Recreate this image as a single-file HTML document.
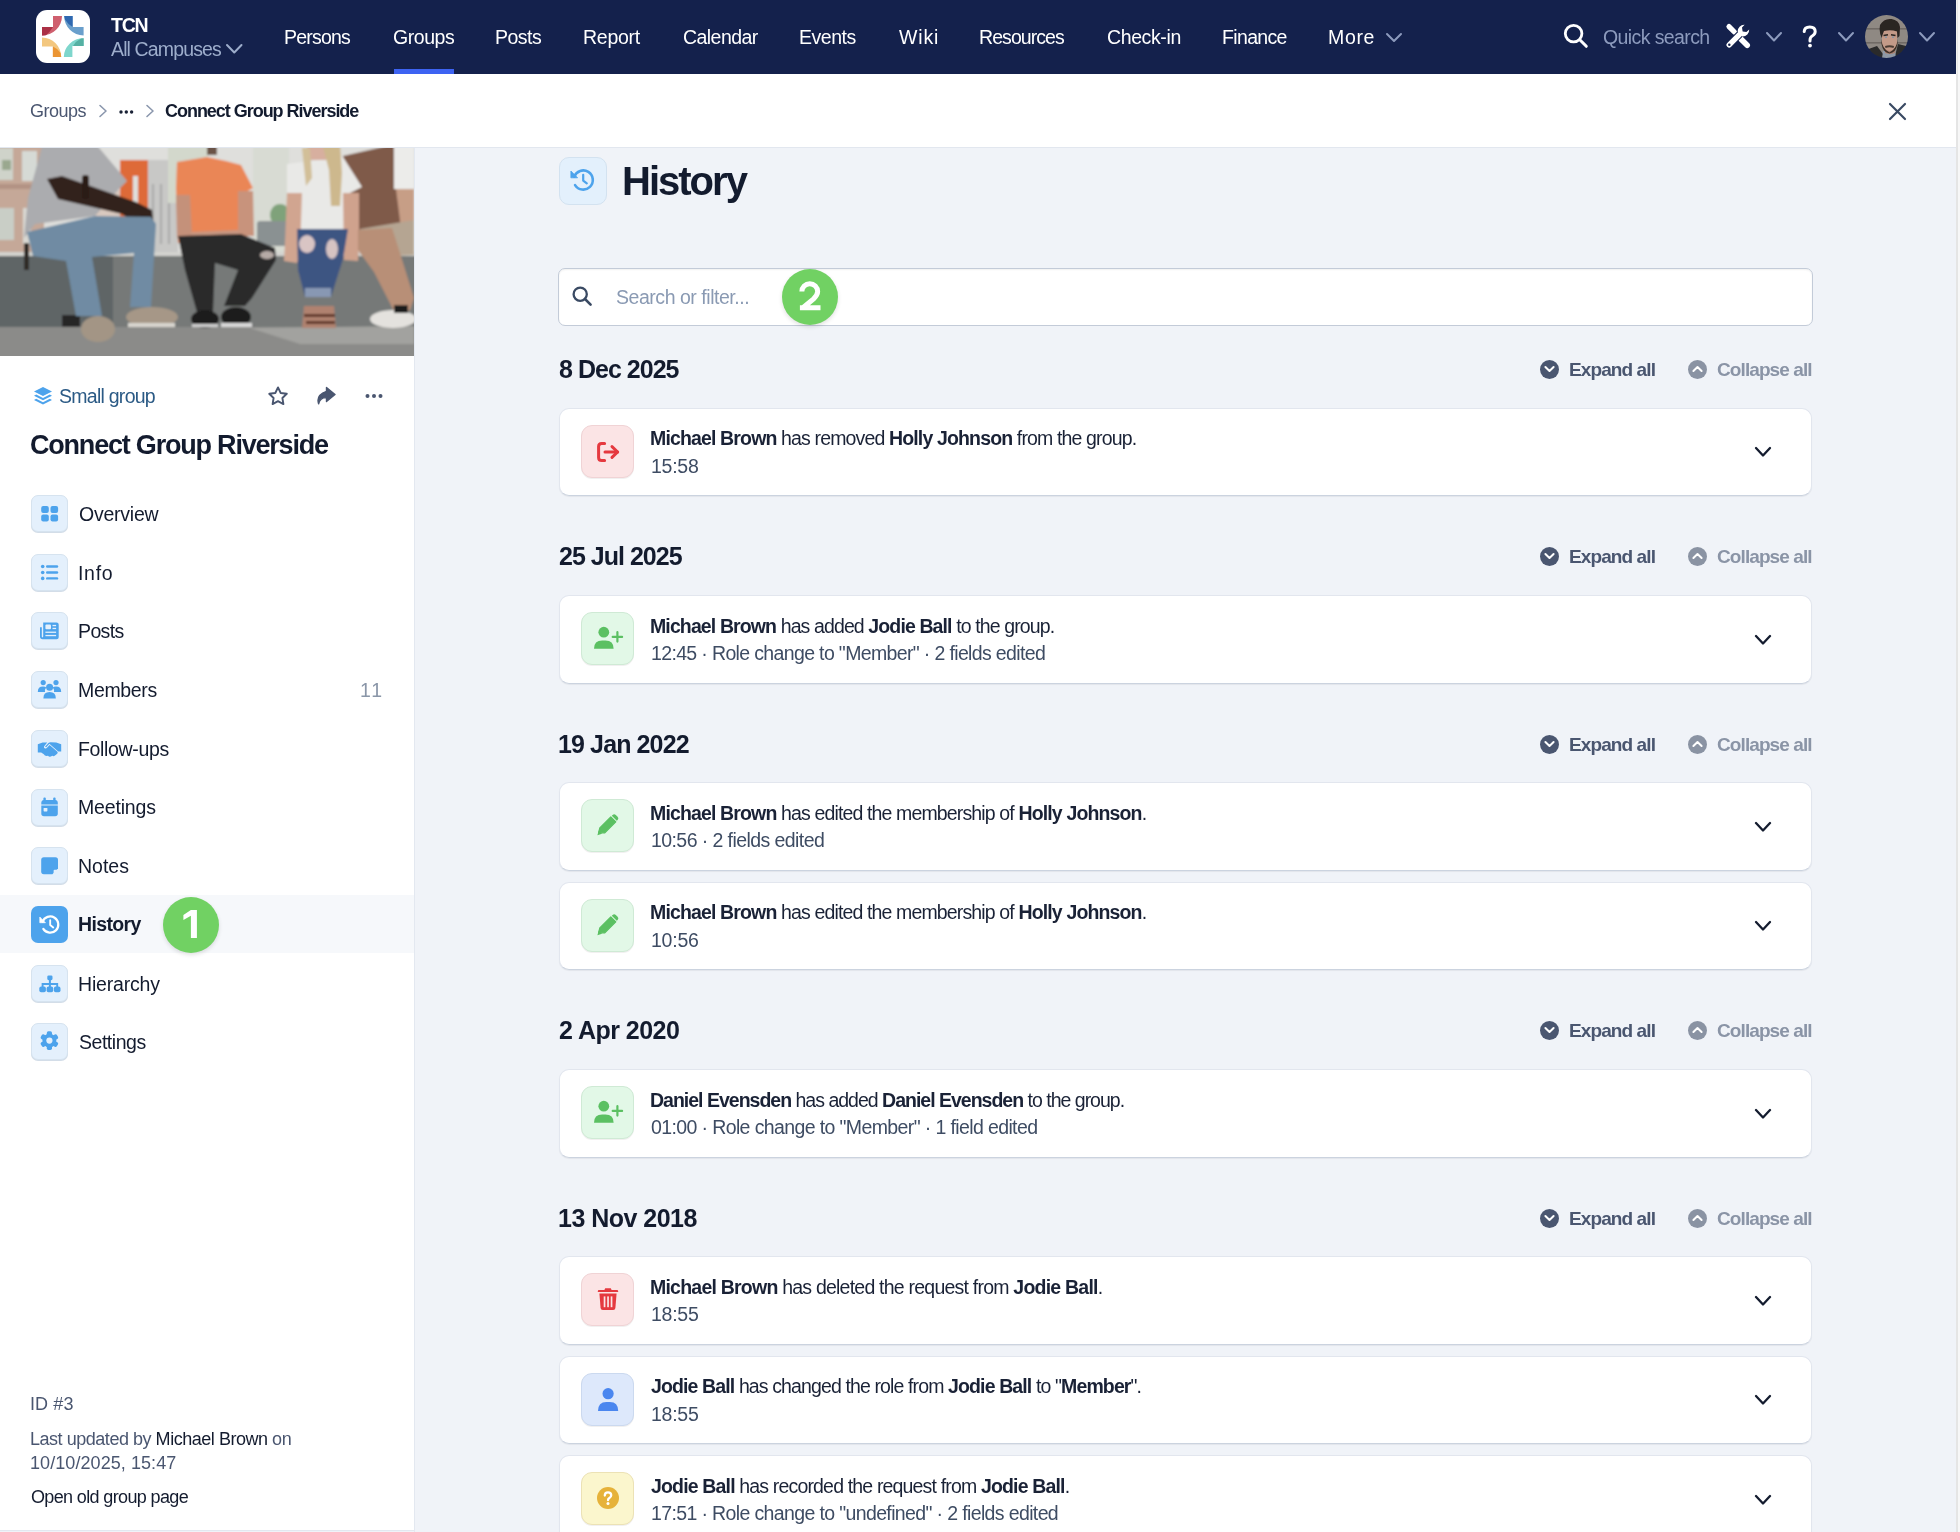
<!DOCTYPE html>
<html><head><meta charset="utf-8"><title>History</title>
<style>
*{box-sizing:border-box;margin:0;padding:0}
html,body{width:1960px;height:1532px;overflow:hidden;background:#f0f3f8;font-family:"Liberation Sans",sans-serif;}
.t{position:absolute;white-space:nowrap;will-change:transform;}
b{font-weight:700;}
svg{display:block}
</style></head><body>
<div style="position:absolute;left:0px;top:0px;width:1956px;height:74px;background:#14214c;"></div><div style="position:absolute;left:0px;top:74px;width:1956px;height:73px;background:#fff;"></div><div style="position:absolute;left:0px;top:147px;width:1956px;height:1px;background:#e2e7ef;"></div><div style="position:absolute;left:0px;top:148px;width:414px;height:1383px;background:#fff;"></div><div style="position:absolute;left:414px;top:148px;width:1px;height:1384px;background:#e3e8f0;"></div><div style="position:absolute;left:0px;top:1530px;width:414px;height:1px;background:#e3e8f0;"></div><div style="position:absolute;left:1956px;top:0px;width:4px;height:1532px;background:#f7f7f7;"></div><div style="position:absolute;left:1956px;top:74px;width:2px;height:1458px;background:#e5e5e5;"></div><div style="position:absolute;left:1956px;top:0px;width:1px;height:74px;background:#f4f4f1;"></div><div style="position:absolute;left:1957px;top:0px;width:1px;height:74px;background:#e8e8e8;"></div><div style="position:absolute;left:36px;top:10px;width:54px;height:53px;background:#fff;border-radius:11px;"></div><svg style="position:absolute;left:36px;top:10px;" width="54" height="53" viewBox="0 0 54 53">
<path d="M17,6 L26,6 A20,19.5 0 0 1 6,25.5 L6,17 L17,17 Z" fill="#cf5f6e"></path>
<path d="M6,17 L17,17 Q13.5,22.5 10,25.3 Q8,25.5 6,25.5 Z" fill="#ab3045"></path>
<path d="M28.2,6 L36.6,6 L36.6,17 L47.6,17 L47.6,25.4 A19.4,19.4 0 0 1 28.2,6 Z" fill="#6a9fcc"></path>
<path d="M28.2,6 L36.6,6 L36.6,17 Q32,14.5 29,9.5 Z" fill="#2f68b0"></path>
<path d="M6,27.5 A19.5,19.5 0 0 1 25.2,47 L16.9,47 L16.9,36.4 L6,36.4 Z" fill="#f3c77f"></path>
<path d="M16.9,36.4 Q22,38.5 24.6,43 L25.2,47 L16.9,47 Z" fill="#eb9533"></path>
<path d="M47.6,28.2 L47.6,36 L36.4,36 L36.4,47 L27.8,47 A19.7,19 0 0 1 47.6,28.2 Z" fill="#7ed6cc"></path>
<path d="M47.6,28.2 L47.6,36 L37,36 Q40,31 45,28.6 Z" fill="#55b0a3"></path>
</svg><svg style="position:absolute;left:0px;top:148px;" width="414" height="208" viewBox="0 0 414 208">
<defs><filter id="pb" x="-5%" y="-5%" width="110%" height="110%"><feGaussianBlur stdDeviation="1.1"></feGaussianBlur></filter>
<clipPath id="pc"><rect width="414" height="208"></rect></clipPath></defs>
<g clip-path="url(#pc)"><g filter="url(#pb)">
<rect x="-5" y="-5" width="424" height="220" fill="#dfdfdc"></rect>
<rect x="-5" y="-5" width="49" height="114" fill="#c5a898"></rect>
<rect x="-5" y="0" width="18" height="32" fill="#cfd3ca"></rect>
<rect x="2" y="12" width="9" height="10" fill="#9aa88f"></rect>
<rect x="22" y="3" width="15" height="30" fill="#d6dad5"></rect>
<rect x="-5" y="60" width="19" height="32" fill="#c9cec6"></rect>
<rect x="23" y="60" width="8" height="36" fill="#d9d8d2"></rect>
<rect x="-5" y="36" width="49" height="5" fill="#b39384"></rect>
<rect x="95" y="42" width="27" height="66" fill="#d9c9bf"></rect>
<rect x="148" y="12" width="30" height="92" fill="#c8c8c6"></rect>
<rect x="152" y="36" width="2" height="60" fill="#a9aaa9"></rect><rect x="160" y="36" width="2" height="60" fill="#a9aaa9"></rect><rect x="168" y="36" width="2" height="60" fill="#a9aaa9"></rect>
<rect x="168" y="-5" width="40" height="60" fill="#d3d8cc"></rect>
<path d="M120,12 L148,12 L148,107 L138,107 L138,28 L133,28 L133,107 L120,107 Z" fill="#de6b39"></path>
<rect x="253" y="-5" width="36" height="113" fill="#d8dbd3"></rect>
<ellipse cx="280" cy="67" rx="10" ry="11" fill="#7fa27a"></ellipse>
<rect x="257" y="73" width="31" height="25" rx="3" fill="#8a9192"></rect>
<path d="M343,8 L400,-5 L414,-5 L414,72 L362,84 L345,84 Z" fill="#7f5a4a"></path>
<rect x="-5" y="107" width="424" height="73" fill="#767978"></rect>
<rect x="-5" y="107" width="118" height="73" fill="#5f6566"></rect>
<rect x="-5" y="104" width="424" height="4" fill="#d3d3cf"></rect>
<rect x="-5" y="179" width="424" height="35" fill="#8b8b89"></rect>
<path d="M250,180 L414,178 L414,196 L300,196 Z" fill="#a2a29f"></path>
<rect x="62" y="167" width="18" height="12" fill="#262626"></rect>
<!-- person 1 -->
<rect x="72" y="-5" width="23" height="12" fill="#3d2c25"></rect>
<path d="M43,-5 L95,-5 L127,33 L118,42 L95,68 L35,76 L24,90 L28,50 Z" fill="#abacaf"></path>
<path d="M47,31 L62,28 L136,54 L152,62 L153,72 L140,78 L122,66 L58,51 Z" fill="#33241f"></path>
<rect x="82" y="27" width="7" height="24" rx="3" fill="#2a1a18"></rect>
<path d="M27,84 L95,68 L151,69 L156,76 L151,159 L130,159 L134,105 L92,109 L102,168 L76,168 L66,113 L33,108 Z" fill="#6f8ba3"></path>
<rect x="24" y="95" width="5" height="27" fill="#2e2a26"></rect>
<ellipse cx="98" cy="181" rx="17" ry="13" fill="#a39585"></ellipse>
<ellipse cx="152" cy="169" rx="26" ry="10" fill="#a69787"></ellipse>
<rect x="128" y="175" width="47" height="4" fill="#d8d5cf"></rect>
<!-- person 2 -->
<rect x="207" y="-5" width="10" height="12" fill="#6b5246"></rect>
<path d="M177,14 L207,9 L226,13 L241,17 L253,40 L242,46 L240,84 L178,95 L176,40 Z" fill="#ea8656"></path>
<path d="M238,43 L253,43 L254,88 L238,88 Z" fill="#c8937c"></path>
<path d="M176,47 L190,47 L192,88 L177,90 Z" fill="#c4917a"></path>
<path d="M190,84 L238,82 L240,102 L205,104 Z" fill="#c79680"></path>
<path d="M178,88 L241,86 L275,100 L276,112 L252,150 L245,158 L224,158 L238,122 L215,115 L213,165 L198,168 L185,122 Z" fill="#2a2a2c"></path>
<ellipse cx="267" cy="107" rx="7" ry="4" fill="#b6aaa6"></ellipse>
<ellipse cx="236" cy="169" rx="15" ry="10" fill="#1e1e1f"></ellipse>
<rect x="221" y="175" width="31" height="4" fill="#d8d8d8"></rect>
<ellipse cx="205" cy="171" rx="14" ry="9" fill="#1e1e1f"></ellipse>
<rect x="192" y="176" width="26" height="3" fill="#cfcfcf"></rect>
<!-- person 3 -->
<path d="M287,16 L343,9 L362,39 L348,46 L348,84 L299,84 L302,45 L287,45 Z" fill="#e9e9e7"></path>
<rect x="307" y="-5" width="19" height="17" fill="#d7af9f"></rect>
<path d="M302,0 L310,0 L312,30 L306,38 Z" fill="#d2bf98"></path>
<path d="M322,-5 L340,-5 L342,25 L340,58 L331,58 L329,22 Z" fill="#cdb88d"></path>
<path d="M287,45 L302,45 L300,106 L297,115 L284,113 L285,95 Z" fill="#d1a590"></path>
<path d="M343,45 L359,45 L359,95 L358,113 L344,112 Z" fill="#cfa28d"></path>
<path d="M297,81 L348,81 L343,111 L331,149 L305,149 L298,122 Z" fill="#3e5582"></path>
<ellipse cx="307" cy="96" rx="8" ry="9" fill="#d9c5c4"></ellipse>
<ellipse cx="332" cy="101" rx="6" ry="10" fill="#d6c3c2"></ellipse>
<rect x="305" y="140" width="26" height="9" fill="#8898b3"></rect>
<path d="M304,158 L334,158 L336,180 L302,180 Z" fill="#b08270"></path><rect x="304" y="166" width="31" height="3" fill="#5e3526"></rect><rect x="306" y="173" width="29" height="3" fill="#5e3526"></rect>
<!-- person 4 -->
<path d="M394,-5 L414,-5 L414,41 L394,41 Z" fill="#ececea"></path>
<path d="M396,41 L414,41 L414,88 L402,88 Z" fill="#c79e86"></path>
<path d="M360,81 L414,72 L414,107 L390,108 L360,95 Z" fill="#b5a592"></path>
<path d="M358,82 L392,80 L399,102 L414,150 L410,162 L396,167 L374,124 L358,102 Z" fill="#b88f77"></path>
<ellipse cx="393" cy="171" rx="23" ry="9" fill="#e4e2de"></ellipse>
<rect x="394" y="157" width="14" height="8" fill="#1f1f1f"></rect>
</g></g>
</svg><div class="t" style="left: 110.78px; top: 16px; font-size: 19.5px; line-height: 19.5px; color: rgb(255, 255, 255); font-weight: 700; letter-spacing: -1.273px;">TCN</div><div class="t" style="left: 110.96px; top: 40px; font-size: 19.5px; line-height: 19.5px; color: rgb(157, 173, 203); letter-spacing: -0.869px;">All Campuses</div><svg style="position:absolute;left:225px;top:43px;" width="18.5" height="11.5" viewBox="0 0 18.5 11.5"><polyline points="2,2 9.25,9.5 16.5,2" fill="none" stroke="#9dadcb" stroke-width="2" stroke-linecap="round" stroke-linejoin="round"></polyline></svg><div class="t" style="left: 284.4px; top: 28px; font-size: 19.5px; line-height: 19.5px; color: rgb(255, 255, 255); letter-spacing: -0.79px;">Persons</div><div class="t" style="left: 393.02px; top: 28px; font-size: 19.5px; line-height: 19.5px; color: rgb(255, 255, 255); letter-spacing: -0.454px;">Groups</div><div class="t" style="left: 495.4px; top: 28px; font-size: 19.5px; line-height: 19.5px; color: rgb(255, 255, 255); letter-spacing: -0.494px;">Posts</div><div class="t" style="left: 583.4px; top: 28px; font-size: 19.5px; line-height: 19.5px; color: rgb(255, 255, 255); letter-spacing: -0.258px;">Report</div><div class="t" style="left: 683.01px; top: 28px; font-size: 19.5px; line-height: 19.5px; color: rgb(255, 255, 255); letter-spacing: -0.547px;">Calendar</div><div class="t" style="left: 799.4px; top: 28px; font-size: 19.5px; line-height: 19.5px; color: rgb(255, 255, 255); letter-spacing: -0.464px;">Events</div><div class="t" style="left: 898.91px; top: 28px; font-size: 19.5px; line-height: 19.5px; color: rgb(255, 255, 255); letter-spacing: 0.857px;">Wiki</div><div class="t" style="left: 979.4px; top: 28px; font-size: 19.5px; line-height: 19.5px; color: rgb(255, 255, 255); letter-spacing: -0.927px;">Resources</div><div class="t" style="left: 1107.01px; top: 28px; font-size: 19.5px; line-height: 19.5px; color: rgb(255, 255, 255); letter-spacing: -0.385px;">Check-in</div><div class="t" style="left: 1222.4px; top: 28px; font-size: 19.5px; line-height: 19.5px; color: rgb(255, 255, 255); letter-spacing: -0.651px;">Finance</div><div class="t" style="left: 1328.4px; top: 28px; font-size: 19.5px; line-height: 19.5px; color: rgb(255, 255, 255); letter-spacing: 0.676px;">More</div><svg style="position:absolute;left:1385px;top:31.5px;" width="18" height="11.0" viewBox="0 0 18 11.0"><polyline points="2,2 9.0,9.0 16,2" fill="none" stroke="#8d9bbd" stroke-width="2" stroke-linecap="round" stroke-linejoin="round"></polyline></svg><div style="position:absolute;left:394px;top:69px;width:60px;height:5px;background:#3d63f2;"></div><div class="t" style="left: 1603.08px; top: 28px; font-size: 19.5px; line-height: 19.5px; color: rgb(141, 155, 189); letter-spacing: -0.601px;">Quick search</div><svg style="position:absolute;left:1765px;top:31px;" width="18" height="11.5" viewBox="0 0 18 11.5"><polyline points="2,2 9.0,9.5 16,2" fill="none" stroke="#8d9bbd" stroke-width="2" stroke-linecap="round" stroke-linejoin="round"></polyline></svg><svg style="position:absolute;left:1837px;top:31px;" width="18" height="11.5" viewBox="0 0 18 11.5"><polyline points="2,2 9.0,9.5 16,2" fill="none" stroke="#8d9bbd" stroke-width="2" stroke-linecap="round" stroke-linejoin="round"></polyline></svg><svg style="position:absolute;left:1917.5px;top:31px;" width="18.0" height="11.5" viewBox="0 0 18.0 11.5"><polyline points="2,2 9.0,9.5 16.0,2" fill="none" stroke="#8d9bbd" stroke-width="2" stroke-linecap="round" stroke-linejoin="round"></polyline></svg><div class="t" style="left: 30.49px; top: 102px; font-size: 18px; line-height: 18px; color: rgb(74, 86, 112); letter-spacing: -0.495px;">Groups</div><svg style="position:absolute;left:98px;top:104px;" width="12" height="14" viewBox="0 0 12 14"><polyline points="2,1.5 8,7 2,12.5" fill="none" stroke="#8b97ad" stroke-width="1.6" stroke-linecap="round" stroke-linejoin="round"></polyline></svg><svg style="position:absolute;left:119px;top:109px;" width="15" height="6" viewBox="0 0 15 6"><circle cx="2" cy="3" r="1.7" fill="#1a2236"></circle><circle cx="7.3" cy="3" r="1.7" fill="#1a2236"></circle><circle cx="12.6" cy="3" r="1.7" fill="#1a2236"></circle></svg><svg style="position:absolute;left:145px;top:104px;" width="12" height="14" viewBox="0 0 12 14"><polyline points="2,1.5 8,7 2,12.5" fill="none" stroke="#8b97ad" stroke-width="1.6" stroke-linecap="round" stroke-linejoin="round"></polyline></svg><div class="t" style="left: 164.96px; top: 102px; font-size: 18px; line-height: 18px; color: rgb(19, 27, 46); font-weight: 700; letter-spacing: -1.032px;">Connect Group Riverside</div><svg style="position:absolute;left:1888px;top:102px;" width="19" height="19" viewBox="0 0 19 19"><path d="M2,2 L17,17 M17,2 L2,17" stroke="#3a4a63" stroke-width="2.2" stroke-linecap="round"></path></svg><div class="t" style="left: 58.81px; top: 387px; font-size: 19.5px; line-height: 19.5px; color: rgb(43, 90, 133); letter-spacing: -0.736px;">Small group</div><div class="t" style="left: 30.49px; top: 432px; font-size: 27px; line-height: 27px; color: rgb(19, 27, 46); font-weight: 700; letter-spacing: -1.206px;">Connect Group Riverside</div><div style="position:absolute;left:31px;top:495.0px;width:37px;height:37px;background:#e4f0fc;border:1px solid #d6e3ef;border-radius:7px;box-shadow:0 1px 0 #d3dde8;"></div><div class="t" style="left: 78.68px; top: 505px; font-size: 19.5px; line-height: 19.5px; color: rgb(19, 27, 46); letter-spacing: -0.229px;">Overview</div><div style="position:absolute;left:31px;top:553.7px;width:37px;height:37px;background:#e4f0fc;border:1px solid #d6e3ef;border-radius:7px;box-shadow:0 1px 0 #d3dde8;"></div><div class="t" style="left: 77.8px; top: 564px; font-size: 19.5px; line-height: 19.5px; color: rgb(19, 27, 46); letter-spacing: 0.696px;">Info</div><div style="position:absolute;left:31px;top:612.4px;width:37px;height:37px;background:#e4f0fc;border:1px solid #d6e3ef;border-radius:7px;box-shadow:0 1px 0 #d3dde8;"></div><div class="t" style="left: 78px; top: 622px; font-size: 19.5px; line-height: 19.5px; color: rgb(19, 27, 46); letter-spacing: -0.619px;">Posts</div><div style="position:absolute;left:31px;top:671.1px;width:37px;height:37px;background:#e4f0fc;border:1px solid #d6e3ef;border-radius:7px;box-shadow:0 1px 0 #d3dde8;"></div><div class="t" style="left: 78px; top: 681px; font-size: 19.5px; line-height: 19.5px; color: rgb(19, 27, 46); letter-spacing: -0.33px;">Members</div><div style="position:absolute;left:31px;top:729.8px;width:37px;height:37px;background:#e4f0fc;border:1px solid #d6e3ef;border-radius:7px;box-shadow:0 1px 0 #d3dde8;"></div><div class="t" style="left: 78px; top: 740px; font-size: 19.5px; line-height: 19.5px; color: rgb(19, 27, 46); letter-spacing: -0.333px;">Follow-ups</div><div style="position:absolute;left:31px;top:788.5px;width:37px;height:37px;background:#e4f0fc;border:1px solid #d6e3ef;border-radius:7px;box-shadow:0 1px 0 #d3dde8;"></div><div class="t" style="left: 78px; top: 798px; font-size: 19.5px; line-height: 19.5px; color: rgb(19, 27, 46); letter-spacing: -0.174px;">Meetings</div><div style="position:absolute;left:31px;top:847.2px;width:37px;height:37px;background:#e4f0fc;border:1px solid #d6e3ef;border-radius:7px;box-shadow:0 1px 0 #d3dde8;"></div><div class="t" style="left: 78px; top: 857px; font-size: 19.5px; line-height: 19.5px; color: rgb(19, 27, 46); letter-spacing: -0.012px;">Notes</div><div style="position:absolute;left:0px;top:895px;width:414px;height:58px;background:#f6f8fb;"></div><div style="position:absolute;left:31px;top:905.9000000000001px;width:37px;height:37px;background:#4da3ec;border-radius:7px;"></div><div class="t" style="left: 78.3px; top: 915px; font-size: 19.5px; line-height: 19.5px; color: rgb(19, 27, 46); font-weight: 700; letter-spacing: -0.63px;">History</div><div style="position:absolute;left:31px;top:964.6px;width:37px;height:37px;background:#e4f0fc;border:1px solid #d6e3ef;border-radius:7px;box-shadow:0 1px 0 #d3dde8;"></div><div class="t" style="left: 78px; top: 975px; font-size: 19.5px; line-height: 19.5px; color: rgb(19, 27, 46); letter-spacing: -0.175px;">Hierarchy</div><div style="position:absolute;left:31px;top:1023.3000000000002px;width:37px;height:37px;background:#e4f0fc;border:1px solid #d6e3ef;border-radius:7px;box-shadow:0 1px 0 #d3dde8;"></div><div class="t" style="left: 78.71px; top: 1033px; font-size: 19.5px; line-height: 19.5px; color: rgb(19, 27, 46); letter-spacing: -0.468px;">Settings</div><div class="t" style="left: 360.21px; top: 681px; font-size: 19.5px; line-height: 19.5px; color: rgb(138, 150, 168); letter-spacing: 1.887px;">11</div><div class="t" style="left: 29.84px; top: 1395px; font-size: 18px; line-height: 18px; color: rgb(74, 86, 112); letter-spacing: 0.105px;">ID #3</div><div class="t" style="left: 30.02px; top: 1430px; font-size: 18px; line-height: 18px; color: rgb(74, 86, 112); letter-spacing: -0.469px;">Last updated by <span style="color:#131b2e">Michael Brown</span> on</div><div class="t" style="left: 30.13px; top: 1454px; font-size: 18px; line-height: 18px; color: rgb(74, 86, 112); letter-spacing: 0.071px;">10/10/2025, 15:47</div><div class="t" style="left: 30.65px; top: 1488px; font-size: 18px; line-height: 18px; color: rgb(19, 27, 46); letter-spacing: -0.638px;">Open old group page</div><div style="position:absolute;left:559px;top:157px;width:48px;height:48px;background:#e3f0fc;border:1px solid #d3e2f0;border-radius:10px;"></div><div class="t" style="left: 622.12px; top: 161px; font-size: 40px; line-height: 40px; color: rgb(19, 27, 46); font-weight: 700; letter-spacing: -1.987px;">History</div><div style="position:absolute;left:558px;top:268px;width:1255px;height:58px;background:#fff;border:1px solid #c3cbd8;border-radius:7px;box-shadow:inset 0 1px 2px rgba(0,0,0,.06);"></div><div class="t" style="left: 616.41px; top: 288px; font-size: 19.5px; line-height: 19.5px; color: rgb(138, 154, 179); letter-spacing: -0.462px;">Search or filter...</div><div class="t" style="left: 558.81px; top: 357px; font-size: 25px; line-height: 25px; color: rgb(19, 27, 46); font-weight: 700; letter-spacing: -0.977px;">8 Dec 2025</div><div style="position:absolute;left:1540px;top:359.5px;width:19px;height:19px;border-radius:50%;background:#4a5670;"></div><div class="t" style="left: 1569.43px; top: 360px; font-size: 19px; line-height: 19px; color: rgb(74, 86, 112); font-weight: 700; letter-spacing: -0.902px;">Expand all</div><div style="position:absolute;left:1687.5px;top:359.5px;width:19px;height:19px;border-radius:50%;background:#8a93a3;"></div><div class="t" style="left: 1716.82px; top: 360px; font-size: 19px; line-height: 19px; color: rgb(138, 148, 166); font-weight: 700; letter-spacing: -0.908px;">Collapse all</div><div class="t" style="left: 558.73px; top: 544px; font-size: 25px; line-height: 25px; color: rgb(19, 27, 46); font-weight: 700; letter-spacing: -0.988px;">25 Jul 2025</div><div style="position:absolute;left:1540px;top:546.5px;width:19px;height:19px;border-radius:50%;background:#4a5670;"></div><div class="t" style="left: 1569.43px; top: 547px; font-size: 19px; line-height: 19px; color: rgb(74, 86, 112); font-weight: 700; letter-spacing: -0.902px;">Expand all</div><div style="position:absolute;left:1687.5px;top:546.5px;width:19px;height:19px;border-radius:50%;background:#8a93a3;"></div><div class="t" style="left: 1716.82px; top: 547px; font-size: 19px; line-height: 19px; color: rgb(138, 148, 166); font-weight: 700; letter-spacing: -0.908px;">Collapse all</div><div class="t" style="left: 558.03px; top: 732px; font-size: 25px; line-height: 25px; color: rgb(19, 27, 46); font-weight: 700; letter-spacing: -0.883px;">19 Jan 2022</div><div style="position:absolute;left:1540px;top:734.5px;width:19px;height:19px;border-radius:50%;background:#4a5670;"></div><div class="t" style="left: 1569.43px; top: 735px; font-size: 19px; line-height: 19px; color: rgb(74, 86, 112); font-weight: 700; letter-spacing: -0.902px;">Expand all</div><div style="position:absolute;left:1687.5px;top:734.5px;width:19px;height:19px;border-radius:50%;background:#8a93a3;"></div><div class="t" style="left: 1716.82px; top: 735px; font-size: 19px; line-height: 19px; color: rgb(138, 148, 166); font-weight: 700; letter-spacing: -0.908px;">Collapse all</div><div class="t" style="left: 558.73px; top: 1018px; font-size: 25px; line-height: 25px; color: rgb(19, 27, 46); font-weight: 700; letter-spacing: -0.517px;">2 Apr 2020</div><div style="position:absolute;left:1540px;top:1020.5px;width:19px;height:19px;border-radius:50%;background:#4a5670;"></div><div class="t" style="left: 1569.43px; top: 1021px; font-size: 19px; line-height: 19px; color: rgb(74, 86, 112); font-weight: 700; letter-spacing: -0.902px;">Expand all</div><div style="position:absolute;left:1687.5px;top:1020.5px;width:19px;height:19px;border-radius:50%;background:#8a93a3;"></div><div class="t" style="left: 1716.82px; top: 1021px; font-size: 19px; line-height: 19px; color: rgb(138, 148, 166); font-weight: 700; letter-spacing: -0.908px;">Collapse all</div><div class="t" style="left: 558.03px; top: 1206px; font-size: 25px; line-height: 25px; color: rgb(19, 27, 46); font-weight: 700; letter-spacing: -0.52px;">13 Nov 2018</div><div style="position:absolute;left:1540px;top:1208.5px;width:19px;height:19px;border-radius:50%;background:#4a5670;"></div><div class="t" style="left: 1569.43px; top: 1209px; font-size: 19px; line-height: 19px; color: rgb(74, 86, 112); font-weight: 700; letter-spacing: -0.902px;">Expand all</div><div style="position:absolute;left:1687.5px;top:1208.5px;width:19px;height:19px;border-radius:50%;background:#8a93a3;"></div><div class="t" style="left: 1716.82px; top: 1209px; font-size: 19px; line-height: 19px; color: rgb(138, 148, 166); font-weight: 700; letter-spacing: -0.908px;">Collapse all</div><div style="position:absolute;left:559px;top:408px;width:1253px;height:88px;background:#fff;border:1px solid #e2e6ee;border-bottom-color:#cbd3df;border-radius:10px;box-shadow:0 1px 1px rgba(15,23,42,.06);"></div><div style="position:absolute;left:581px;top:425px;width:52.5px;height:52.5px;background:#fbe4e5;border:1px solid #f0d3d5;border-radius:11px;box-shadow:0 1px 0 rgba(60,40,40,.07);"></div><div class="t" style="left: 649.7px; top: 429px; font-size: 19.5px; line-height: 19.5px; color: rgb(26, 34, 54); letter-spacing: -0.853px;"><b>Michael Brown</b> has removed <b>Holly Johnson</b> from the group.</div><div class="t" style="left: 650.51px; top: 457px; font-size: 19.5px; line-height: 19.5px; color: rgb(62, 76, 99); letter-spacing: -0.245px;">15:58</div><svg style="position:absolute;left:1754px;top:446.0px;" width="18" height="11.5" viewBox="0 0 18 11.5"><polyline points="2,2 9.0,9.5 16,2" fill="none" stroke="#141c2f" stroke-width="2.3" stroke-linecap="round" stroke-linejoin="round"></polyline></svg><div style="position:absolute;left:559px;top:595px;width:1253px;height:89px;background:#fff;border:1px solid #e2e6ee;border-bottom-color:#cbd3df;border-radius:10px;box-shadow:0 1px 1px rgba(15,23,42,.06);"></div><div style="position:absolute;left:581px;top:612px;width:52.5px;height:52.5px;background:#e2f8e7;border:1px solid #cfead5;border-radius:11px;box-shadow:0 1px 0 rgba(60,40,40,.07);"></div><div class="t" style="left: 649.7px; top: 617px; font-size: 19.5px; line-height: 19.5px; color: rgb(26, 34, 54); letter-spacing: -0.883px;"><b>Michael Brown</b> has added <b>Jodie Ball</b> to the group.</div><div class="t" style="left: 650.51px; top: 644px; font-size: 19.5px; line-height: 19.5px; color: rgb(62, 76, 99); letter-spacing: -0.646px;">12:45 · Role change to "Member" · 2 fields edited</div><svg style="position:absolute;left:1754px;top:633.6px;" width="18" height="11.5" viewBox="0 0 18 11.5"><polyline points="2,2 9.0,9.5 16,2" fill="none" stroke="#141c2f" stroke-width="2.3" stroke-linecap="round" stroke-linejoin="round"></polyline></svg><div style="position:absolute;left:559px;top:782px;width:1253px;height:89px;background:#fff;border:1px solid #e2e6ee;border-bottom-color:#cbd3df;border-radius:10px;box-shadow:0 1px 1px rgba(15,23,42,.06);"></div><div style="position:absolute;left:581px;top:799px;width:52.5px;height:52.5px;background:#e2f8e7;border:1px solid #cfead5;border-radius:11px;box-shadow:0 1px 0 rgba(60,40,40,.07);"></div><div class="t" style="left: 649.7px; top: 804px; font-size: 19.5px; line-height: 19.5px; color: rgb(26, 34, 54); letter-spacing: -0.858px;"><b>Michael Brown</b> has edited the membership of <b>Holly Johnson</b>.</div><div class="t" style="left: 650.51px; top: 831px; font-size: 19.5px; line-height: 19.5px; color: rgb(62, 76, 99); letter-spacing: -0.578px;">10:56 · 2 fields edited</div><svg style="position:absolute;left:1754px;top:820.6px;" width="18" height="11.5" viewBox="0 0 18 11.5"><polyline points="2,2 9.0,9.5 16,2" fill="none" stroke="#141c2f" stroke-width="2.3" stroke-linecap="round" stroke-linejoin="round"></polyline></svg><div style="position:absolute;left:559px;top:882px;width:1253px;height:88px;background:#fff;border:1px solid #e2e6ee;border-bottom-color:#cbd3df;border-radius:10px;box-shadow:0 1px 1px rgba(15,23,42,.06);"></div><div style="position:absolute;left:581px;top:899px;width:52.5px;height:52.5px;background:#e2f8e7;border:1px solid #cfead5;border-radius:11px;box-shadow:0 1px 0 rgba(60,40,40,.07);"></div><div class="t" style="left: 649.7px; top: 903px; font-size: 19.5px; line-height: 19.5px; color: rgb(26, 34, 54); letter-spacing: -0.858px;"><b>Michael Brown</b> has edited the membership of <b>Holly Johnson</b>.</div><div class="t" style="left: 650.51px; top: 931px; font-size: 19.5px; line-height: 19.5px; color: rgb(62, 76, 99); letter-spacing: -0.243px;">10:56</div><svg style="position:absolute;left:1754px;top:920.0px;" width="18" height="11.5" viewBox="0 0 18 11.5"><polyline points="2,2 9.0,9.5 16,2" fill="none" stroke="#141c2f" stroke-width="2.3" stroke-linecap="round" stroke-linejoin="round"></polyline></svg><div style="position:absolute;left:559px;top:1069px;width:1253px;height:89px;background:#fff;border:1px solid #e2e6ee;border-bottom-color:#cbd3df;border-radius:10px;box-shadow:0 1px 1px rgba(15,23,42,.06);"></div><div style="position:absolute;left:581px;top:1086px;width:52.5px;height:52.5px;background:#e2f8e7;border:1px solid #cfead5;border-radius:11px;box-shadow:0 1px 0 rgba(60,40,40,.07);"></div><div class="t" style="left: 649.7px; top: 1091px; font-size: 19.5px; line-height: 19.5px; color: rgb(26, 34, 54); letter-spacing: -0.998px;"><b>Daniel Evensden</b> has added <b>Daniel Evensden</b> to the group.</div><div class="t" style="left: 651.24px; top: 1118px; font-size: 19.5px; line-height: 19.5px; color: rgb(62, 76, 99); letter-spacing: -0.617px;">01:00 · Role change to "Member" · 1 field edited</div><svg style="position:absolute;left:1754px;top:1107.6px;" width="18" height="11.5" viewBox="0 0 18 11.5"><polyline points="2,2 9.0,9.5 16,2" fill="none" stroke="#141c2f" stroke-width="2.3" stroke-linecap="round" stroke-linejoin="round"></polyline></svg><div style="position:absolute;left:559px;top:1256px;width:1253px;height:89px;background:#fff;border:1px solid #e2e6ee;border-bottom-color:#cbd3df;border-radius:10px;box-shadow:0 1px 1px rgba(15,23,42,.06);"></div><div style="position:absolute;left:581px;top:1273px;width:52.5px;height:52.5px;background:#fbe4e5;border:1px solid #f0d3d5;border-radius:11px;box-shadow:0 1px 0 rgba(60,40,40,.07);"></div><div class="t" style="left: 649.7px; top: 1278px; font-size: 19.5px; line-height: 19.5px; color: rgb(26, 34, 54); letter-spacing: -0.776px;"><b>Michael Brown</b> has deleted the request from <b>Jodie Ball</b>.</div><div class="t" style="left: 650.51px; top: 1305px; font-size: 19.5px; line-height: 19.5px; color: rgb(62, 76, 99); letter-spacing: -0.252px;">18:55</div><svg style="position:absolute;left:1754px;top:1294.6px;" width="18" height="11.5" viewBox="0 0 18 11.5"><polyline points="2,2 9.0,9.5 16,2" fill="none" stroke="#141c2f" stroke-width="2.3" stroke-linecap="round" stroke-linejoin="round"></polyline></svg><div style="position:absolute;left:559px;top:1356px;width:1253px;height:88px;background:#fff;border:1px solid #e2e6ee;border-bottom-color:#cbd3df;border-radius:10px;box-shadow:0 1px 1px rgba(15,23,42,.06);"></div><div style="position:absolute;left:581px;top:1373px;width:52.5px;height:52.5px;background:#dde8fb;border:1px solid #cbd9ef;border-radius:11px;box-shadow:0 1px 0 rgba(60,40,40,.07);"></div><div class="t" style="left: 650.7px; top: 1377px; font-size: 19.5px; line-height: 19.5px; color: rgb(26, 34, 54); letter-spacing: -0.877px;"><b>Jodie Ball</b> has changed the role from <b>Jodie Ball</b> to "<b>Member</b>".</div><div class="t" style="left: 650.51px; top: 1405px; font-size: 19.5px; line-height: 19.5px; color: rgb(62, 76, 99); letter-spacing: -0.252px;">18:55</div><svg style="position:absolute;left:1754px;top:1394.0px;" width="18" height="11.5" viewBox="0 0 18 11.5"><polyline points="2,2 9.0,9.5 16,2" fill="none" stroke="#141c2f" stroke-width="2.3" stroke-linecap="round" stroke-linejoin="round"></polyline></svg><div style="position:absolute;left:559px;top:1455px;width:1253px;height:89px;background:#fff;border:1px solid #e2e6ee;border-bottom-color:#cbd3df;border-radius:10px;box-shadow:0 1px 1px rgba(15,23,42,.06);"></div><div style="position:absolute;left:581px;top:1472px;width:52.5px;height:52.5px;background:#fbf6cd;border:1px solid #ece2b5;border-radius:11px;box-shadow:0 1px 0 rgba(60,40,40,.07);"></div><div class="t" style="left: 650.7px; top: 1477px; font-size: 19.5px; line-height: 19.5px; color: rgb(26, 34, 54); letter-spacing: -0.836px;"><b>Jodie Ball</b> has recorded the request from <b>Jodie Ball</b>.</div><div class="t" style="left: 650.51px; top: 1504px; font-size: 19.5px; line-height: 19.5px; color: rgb(62, 76, 99); letter-spacing: -0.631px;">17:51 · Role change to "undefined" · 2 fields edited</div><svg style="position:absolute;left:1754px;top:1493.6px;" width="18" height="11.5" viewBox="0 0 18 11.5"><polyline points="2,2 9.0,9.5 16,2" fill="none" stroke="#141c2f" stroke-width="2.3" stroke-linecap="round" stroke-linejoin="round"></polyline></svg><svg style="position:absolute;left:1560px;top:20px;" width="30" height="30" viewBox="0 0 30 30"><circle cx="13.6" cy="13.6" r="8.3" fill="none" stroke="#fff" stroke-width="2.8"></circle><line x1="19.8" y1="19.8" x2="26.3" y2="26.3" stroke="#fff" stroke-width="3" stroke-linecap="round"></line></svg><svg style="position:absolute;left:1724px;top:22px;" width="28" height="28" viewBox="0 0 28 28">
<g transform="translate(2,2)">
<line x1="3" y1="2.6" x2="8.4" y2="8" stroke="#fff" stroke-width="5.2" stroke-linecap="round"></line>
<line x1="8" y1="8" x2="14" y2="14" stroke="#fff" stroke-width="2.6"></line>
<line x1="14.4" y1="14.4" x2="21.2" y2="21.2" stroke="#fff" stroke-width="5.6" stroke-linecap="round"></line>
<line x1="3.2" y1="20.8" x2="13.6" y2="10.4" stroke="#14214c" stroke-width="7.4" stroke-linecap="round"></line>
<line x1="3.2" y1="20.8" x2="14.4" y2="9.6" stroke="#fff" stroke-width="5.4" stroke-linecap="round"></line>
<circle cx="3.3" cy="20.7" r="1.25" fill="#14214c"></circle>
<path d="M11.6,7.6 A6.6,6.6 0 0 1 18.6,0.8 L16,3.6 L16.6,7.4 L20.4,8 L23.2,5.4 A6.6,6.6 0 0 1 16.4,12.4 Z" fill="#fff"></path>
</g></svg><svg style="position:absolute;left:1800px;top:24px;" width="20" height="26" viewBox="0 0 20 26"><path d="M4.2,7.6 Q4.4,3 9.8,3 Q15.2,3 15.2,7.6 Q15.2,10.4 12.2,12 Q10,13.2 10,16.2 L10,17" fill="none" stroke="#fff" stroke-width="3" stroke-linecap="round"></path><circle cx="10" cy="21.6" r="1.9" fill="#fff"></circle></svg><svg style="position:absolute;left:1865px;top:15px;" width="43" height="43" viewBox="0 0 43 43">
<defs><clipPath id="avc"><circle cx="21.5" cy="21.5" r="21.5"></circle></clipPath><filter id="avb"><feGaussianBlur stdDeviation="0.6"></feGaussianBlur></filter></defs>
<g clip-path="url(#avc)"><g filter="url(#avb)">
<rect x="-2" y="-2" width="47" height="47" fill="#8f8983"></rect>
<rect x="-2" y="13" width="47" height="1.6" fill="#6f6a65"></rect>
<rect x="-2" y="27" width="47" height="1.6" fill="#6f6a65"></rect>
<path d="M-2,36 L12,31 L18,39 L17,45 L-2,45 Z" fill="#2a2a2b"></path>
<path d="M45,32 L33,29 L29,45 L45,45 Z" fill="#2a2a2b"></path>
<path d="M18,36 L30,35 L31,45 L17,45 Z" fill="#8f99a6"></path>
<path d="M20,31 L30,31 L30,38 Q25,40 20,38 Z" fill="#a98070"></path>
<path d="M17,15 L32,15 L32,29 Q30,35 24.5,36 Q19,35 17,29 Z" fill="#c39a88"></path>
<path d="M16.5,24 Q17,34 24.5,37.5 Q32,34 32.5,24 L32.5,29 Q31,37.5 24.5,38.5 Q18,37.5 16.5,29 Z" fill="#3b2d25"></path>
<path d="M20,31 Q24.5,29.5 29,31 L28.5,33 Q24.5,31.5 20.5,33 Z" fill="#4a3a31"></path>
<path d="M15,10 Q19,3 26.5,4 Q34,5 35,12 L34.5,21 L32.5,23 L32,16.5 Q26,14.5 19,16 L17.5,20 L16.8,23 L15.2,19 Q14,14 15,10 Z" fill="#2c2522"></path>
<path d="M18.5,20.5 L23,19.8 M26,19.8 L30.5,20.5" stroke="#2c2522" stroke-width="1.5"></path>
<circle cx="21" cy="22.2" r="0.9" fill="#7d93a8"></circle><circle cx="28" cy="22.2" r="0.9" fill="#7d93a8"></circle>
</g></g></svg><svg style="position:absolute;left:32px;top:385px;" width="22" height="22" viewBox="0 0 22 22"><path d="M11,2 L20,6.5 L11,11 L2,6.5 Z" fill="#4da3ec"></path><path d="M4.2,9.6 L11,13 L17.8,9.6 L20,10.7 L11,15.2 L2,10.7 Z" fill="#4da3ec"></path><path d="M4.2,13.8 L11,17.2 L17.8,13.8 L20,14.9 L11,19.4 L2,14.9 Z" fill="#4da3ec"></path></svg><svg style="position:absolute;left:266px;top:385px;" width="24" height="22" viewBox="0 0 24 22"><path d="M12,2.4 L14.7,8 L20.8,8.8 L16.4,13 L17.4,19.1 L12,16.2 L6.6,19.1 L7.6,13 L3.2,8.8 L9.3,8 Z" fill="none" stroke="#4a5670" stroke-width="1.9" stroke-linejoin="round"></path></svg><svg style="position:absolute;left:315px;top:386px;" width="22" height="20" viewBox="0 0 22 20"><path d="M11.5,1.5 L20,8.5 L11.5,15.5 L11.5,11.6 Q5,11.4 3.6,17.8 Q0.8,9 11.5,5.3 Z" fill="#4a5670" stroke="#4a5670" stroke-width="1.4" stroke-linejoin="round"></path></svg><svg style="position:absolute;left:364px;top:392px;" width="20" height="8" viewBox="0 0 20 8"><circle cx="3.5" cy="4" r="2" fill="#4a5670"></circle><circle cx="10" cy="4" r="2" fill="#4a5670"></circle><circle cx="16.5" cy="4" r="2" fill="#4a5670"></circle></svg><svg style="position:absolute;left:31px;top:495.0px;" width="37" height="37" viewBox="0 0 37 37"><rect x="10.2" y="10.9" width="7.6" height="7.1" rx="2" fill="#4da3ec"></rect><rect x="19.5" y="10.9" width="7.6" height="7.1" rx="2" fill="#4da3ec"></rect><rect x="10.2" y="19.5" width="7.6" height="7.1" rx="2" fill="#4da3ec"></rect><rect x="19.5" y="19.5" width="7.6" height="7.1" rx="2" fill="#4da3ec"></rect></svg><svg style="position:absolute;left:31px;top:553.7px;" width="37" height="37" viewBox="0 0 37 37"><circle cx="11.7" cy="12.5" r="1.8" fill="#4da3ec"></circle><circle cx="11.7" cy="18.5" r="1.8" fill="#4da3ec"></circle><circle cx="11.7" cy="24.4" r="1.8" fill="#4da3ec"></circle><rect x="15" y="11.3" width="12.2" height="2.4" rx="1.2" fill="#4da3ec"></rect><rect x="15" y="17.3" width="12.2" height="2.4" rx="1.2" fill="#4da3ec"></rect><rect x="15" y="23.2" width="12.2" height="2.4" rx="1.2" fill="#4da3ec"></rect></svg><svg style="position:absolute;left:31px;top:612.4px;" width="37" height="37" viewBox="0 0 37 37"><path d="M12.2,10.5 L25.6,10.5 Q27.7,10.5 27.7,12.6 L27.7,25.2 Q27.7,27.2 25.6,27.2 L11.6,27.2 Q9,27.2 9,24.6 L9,15.2 L10.8,15.2 L10.8,24.6 Q10.8,25.4 11.4,25.4 Q12.2,25.4 12.2,24.6 Z" fill="#4da3ec"></path><rect x="14.4" y="12.6" width="5.6" height="4.6" rx="1" fill="#e4f0fc"></rect><rect x="21.5" y="12.9" width="3.6" height="1.3" fill="#e4f0fc"></rect><rect x="21.5" y="15.8" width="3.6" height="1.3" fill="#e4f0fc"></rect><rect x="14.4" y="19.6" width="10.7" height="1.3" fill="#e4f0fc"></rect><rect x="14.4" y="22.9" width="10.7" height="1.3" fill="#e4f0fc"></rect></svg><svg style="position:absolute;left:31px;top:671.1px;" width="37" height="37" viewBox="0 0 37 37"><circle cx="12.2" cy="11.6" r="2.6" fill="#4da3ec"></circle><circle cx="25" cy="11.6" r="2.6" fill="#4da3ec"></circle><path d="M6.8,21 Q6.8,15.6 12,15.6 Q14.4,15.6 15.2,16.6 Q13.6,18.6 14,21 Z" fill="#4da3ec"></path><path d="M30.2,21 Q30.2,15.6 25,15.6 Q22.6,15.6 21.8,16.6 Q23.4,18.6 23,21 Z" fill="#4da3ec"></path><circle cx="18.6" cy="16.2" r="3.5" fill="#4da3ec"></circle><path d="M12.4,27.4 Q12.4,21 18.6,21 Q24.8,21 24.8,27.4 Z" fill="#4da3ec"></path></svg><svg style="position:absolute;left:31px;top:729.8px;" width="37" height="37" viewBox="0 0 37 37"><path d="M6.8,14.2 L11.6,12.4 L16.2,12.6 L13,16.4 Q12.6,18 14,18.4 Q15.2,18.8 16.2,17.6 L18.6,15 L26.4,21.8 Q27.2,23 26.2,23.8 L24,25.6 Q22.6,26.6 21.4,25.8 L19.8,26.6 Q18,27 17,25.8 L15.6,26 Q13.6,26 12.8,24.2 L10.2,22.6 L6.8,22.6 Z" fill="#4da3ec"></path><path d="M30.2,14.2 L25.2,12.4 L19.6,12.2 Q18.2,12.2 17.4,13 L14,16.8 L15.2,17.2 L18.4,13.8 L27.2,21.4 L30.2,21.6 Z" fill="#4da3ec"></path></svg><svg style="position:absolute;left:31px;top:788.5px;" width="37" height="37" viewBox="0 0 37 37"><rect x="12.4" y="8.6" width="2.4" height="4" rx="1" fill="#4da3ec"></rect><rect x="22.2" y="8.6" width="2.4" height="4" rx="1" fill="#4da3ec"></rect><path d="M10.3,13.8 Q10.3,10.9 13,10.9 L24.2,10.9 Q26.8,10.9 26.8,13.8 L26.8,15.4 L10.3,15.4 Z" fill="#4da3ec"></path><path d="M10.3,16.6 L26.8,16.6 L26.8,24.6 Q26.8,27.3 24.2,27.3 L13,27.3 Q10.3,27.3 10.3,24.6 Z" fill="#4da3ec"></path><rect x="12.6" y="19" width="3.8" height="3.4" rx=".6" fill="#e4f0fc"></rect></svg><svg style="position:absolute;left:31px;top:847.2px;" width="37" height="37" viewBox="0 0 37 37"><path d="M12.8,10.3 L24.4,10.3 Q27,10.3 27,12.9 L27,21.6 L21.4,27.2 L12.8,27.2 Q10.2,27.2 10.2,24.6 L10.2,12.9 Q10.2,10.3 12.8,10.3 Z" fill="#4da3ec"></path><path d="M22.6,27.2 L22.6,23.8 Q22.6,22.8 23.6,22.8 L27,22.8 Z" fill="#e4f0fc"></path></svg><svg style="position:absolute;left:31px;top:905.9000000000001px;" width="37" height="37" viewBox="0 0 37 37"><g transform="translate(-1.26,-0.84) scale(0.845)"><path d="M15.18,19.72 A9.6,9.6 0 1 1 16.06,28.09" fill="none" stroke="#fff" stroke-width="2.6" stroke-linecap="round"></path><path d="M11.9,14.0 L11.9,20.8 L18.6,20.8 Z" fill="#fff" stroke="#fff" stroke-width="0.8" stroke-linejoin="round"></path><path d="M24.2,17.8 L24.2,23.6 L27.8,26.4" fill="none" stroke="#fff" stroke-width="2.2" stroke-linecap="round" stroke-linejoin="round"></path></g></svg><svg style="position:absolute;left:31px;top:964.6px;" width="37" height="37" viewBox="0 0 37 37"><rect x="16.3" y="10.4" width="5.2" height="4.8" rx="1.4" fill="#4da3ec"></rect><rect x="17.9" y="14.6" width="2" height="4" fill="#4da3ec"></rect><path d="M11.6,22 L11.6,19 L26.2,19 L26.2,22" fill="none" stroke="#4da3ec" stroke-width="1.9"></path><rect x="17.9" y="18.6" width="2" height="3.4" fill="#4da3ec"></rect><rect x="8.3" y="21.6" width="6.6" height="5.6" rx="1.8" fill="#4da3ec"></rect><rect x="15.6" y="21.6" width="6.6" height="5.6" rx="1.8" fill="#4da3ec"></rect><rect x="22.9" y="21.6" width="6.6" height="5.6" rx="1.8" fill="#4da3ec"></rect></svg><svg style="position:absolute;left:31px;top:1023.3000000000002px;" width="37" height="37" viewBox="0 0 37 37"><g transform="translate(18.4,17.6)"><circle r="6.9" fill="#4da3ec"></circle><rect x="-2.6" y="-9.3" width="5.2" height="6" rx="1.6" transform="rotate(0)" fill="#4da3ec"></rect><rect x="-2.6" y="-9.3" width="5.2" height="6" rx="1.6" transform="rotate(60)" fill="#4da3ec"></rect><rect x="-2.6" y="-9.3" width="5.2" height="6" rx="1.6" transform="rotate(120)" fill="#4da3ec"></rect><rect x="-2.6" y="-9.3" width="5.2" height="6" rx="1.6" transform="rotate(180)" fill="#4da3ec"></rect><rect x="-2.6" y="-9.3" width="5.2" height="6" rx="1.6" transform="rotate(240)" fill="#4da3ec"></rect><rect x="-2.6" y="-9.3" width="5.2" height="6" rx="1.6" transform="rotate(300)" fill="#4da3ec"></rect><circle r="3.1" fill="#e4f0fc"></circle></g></svg><svg style="position:absolute;left:559px;top:157px;" width="48" height="48" viewBox="0 0 48 48"><path d="M15.18,19.72 A9.6,9.6 0 1 1 16.06,28.09" fill="none" stroke="#4da3ec" stroke-width="2.6" stroke-linecap="round"></path><path d="M11.9,14.0 L11.9,20.8 L18.6,20.8 Z" fill="#4da3ec" stroke="#4da3ec" stroke-width="0.8" stroke-linejoin="round"></path><path d="M24.2,17.8 L24.2,23.6 L27.8,26.4" fill="none" stroke="#4da3ec" stroke-width="2.2" stroke-linecap="round" stroke-linejoin="round"></path></svg><svg style="position:absolute;left:570px;top:284px;" width="25" height="25" viewBox="0 0 25 25"><circle cx="10.2" cy="10.2" r="6.6" fill="none" stroke="#3a4a63" stroke-width="2.3"></circle><line x1="15" y1="15" x2="20.6" y2="20.6" stroke="#3a4a63" stroke-width="2.6" stroke-linecap="round"></line></svg><svg style="position:absolute;left:1543px;top:363px;" width="13" height="12" viewBox="0 0 13 12"><polyline points="2.4,4 6.5,8 10.6,4" fill="none" stroke="#fff" stroke-width="2" stroke-linecap="round" stroke-linejoin="round"></polyline></svg><svg style="position:absolute;left:1690.5px;top:363px;" width="13" height="12" viewBox="0 0 13 12"><polyline points="2.4,8 6.5,4 10.6,8" fill="none" stroke="#fff" stroke-width="2" stroke-linecap="round" stroke-linejoin="round"></polyline></svg><svg style="position:absolute;left:1543px;top:550px;" width="13" height="12" viewBox="0 0 13 12"><polyline points="2.4,4 6.5,8 10.6,4" fill="none" stroke="#fff" stroke-width="2" stroke-linecap="round" stroke-linejoin="round"></polyline></svg><svg style="position:absolute;left:1690.5px;top:550px;" width="13" height="12" viewBox="0 0 13 12"><polyline points="2.4,8 6.5,4 10.6,8" fill="none" stroke="#fff" stroke-width="2" stroke-linecap="round" stroke-linejoin="round"></polyline></svg><svg style="position:absolute;left:1543px;top:738px;" width="13" height="12" viewBox="0 0 13 12"><polyline points="2.4,4 6.5,8 10.6,4" fill="none" stroke="#fff" stroke-width="2" stroke-linecap="round" stroke-linejoin="round"></polyline></svg><svg style="position:absolute;left:1690.5px;top:738px;" width="13" height="12" viewBox="0 0 13 12"><polyline points="2.4,8 6.5,4 10.6,8" fill="none" stroke="#fff" stroke-width="2" stroke-linecap="round" stroke-linejoin="round"></polyline></svg><svg style="position:absolute;left:1543px;top:1024px;" width="13" height="12" viewBox="0 0 13 12"><polyline points="2.4,4 6.5,8 10.6,4" fill="none" stroke="#fff" stroke-width="2" stroke-linecap="round" stroke-linejoin="round"></polyline></svg><svg style="position:absolute;left:1690.5px;top:1024px;" width="13" height="12" viewBox="0 0 13 12"><polyline points="2.4,8 6.5,4 10.6,8" fill="none" stroke="#fff" stroke-width="2" stroke-linecap="round" stroke-linejoin="round"></polyline></svg><svg style="position:absolute;left:1543px;top:1212px;" width="13" height="12" viewBox="0 0 13 12"><polyline points="2.4,4 6.5,8 10.6,4" fill="none" stroke="#fff" stroke-width="2" stroke-linecap="round" stroke-linejoin="round"></polyline></svg><svg style="position:absolute;left:1690.5px;top:1212px;" width="13" height="12" viewBox="0 0 13 12"><polyline points="2.4,8 6.5,4 10.6,8" fill="none" stroke="#fff" stroke-width="2" stroke-linecap="round" stroke-linejoin="round"></polyline></svg><svg style="position:absolute;left:597.2px;top:441.8px;overflow:visible" width="23" height="20" viewBox="0 0 23 20"><path d="M7.6,1.6 L4.6,1.6 Q1.6,1.6 1.6,4.6 L1.6,15.4 Q1.6,18.4 4.6,18.4 L7.6,18.4" fill="none" stroke="#e5393f" stroke-width="3" stroke-linecap="round"></path><path d="M8,10 L20.6,10" stroke="#e5393f" stroke-width="3" stroke-linecap="round"></path><path d="M15,4.6 L20.6,10 L15,15.4" fill="none" stroke="#e5393f" stroke-width="3" stroke-linecap="round" stroke-linejoin="round"></path></svg><svg style="position:absolute;left:593.7px;top:625.9px;overflow:visible" width="29" height="23.5" viewBox="0 0 29 23.5"><circle cx="9.8" cy="6.2" r="5.4" fill="#5bc062"></circle><path d="M0,22.8 Q0,14.6 8.2,14.6 L11.4,14.6 Q19.6,14.6 19.6,22.8 Z" fill="#5bc062"></path><path d="M23.4,6.2 L23.4,15.6 M18.7,10.9 L28.1,10.9" stroke="#5bc062" stroke-width="2.2" stroke-linecap="round"></path></svg><svg style="position:absolute;left:596px;top:812.5px;overflow:visible" width="24" height="24" viewBox="0 0 24 24"><path d="M2.6,19.8 L3.8,14.8 L14.8,3.8 L19.8,8.8 L8.8,19.8 Z" fill="#5bc062" stroke="#5bc062" stroke-width="1.2" stroke-linejoin="round"></path><path d="M16.6,2 Q18.2,0.4 19.8,2 L21.6,3.8 Q23.2,5.4 21.6,7 L20.8,7.8 L15.8,2.8 Z" fill="#5bc062"></path><path d="M1.4,22.2 L2.8,17.6 L6,20.8 Z" fill="#5bc062"></path></svg><svg style="position:absolute;left:596px;top:912.5px;overflow:visible" width="24" height="24" viewBox="0 0 24 24"><path d="M2.6,19.8 L3.8,14.8 L14.8,3.8 L19.8,8.8 L8.8,19.8 Z" fill="#5bc062" stroke="#5bc062" stroke-width="1.2" stroke-linejoin="round"></path><path d="M16.6,2 Q18.2,0.4 19.8,2 L21.6,3.8 Q23.2,5.4 21.6,7 L20.8,7.8 L15.8,2.8 Z" fill="#5bc062"></path><path d="M1.4,22.2 L2.8,17.6 L6,20.8 Z" fill="#5bc062"></path></svg><svg style="position:absolute;left:593.7px;top:1099.9px;overflow:visible" width="29" height="23.5" viewBox="0 0 29 23.5"><circle cx="9.8" cy="6.2" r="5.4" fill="#5bc062"></circle><path d="M0,22.8 Q0,14.6 8.2,14.6 L11.4,14.6 Q19.6,14.6 19.6,22.8 Z" fill="#5bc062"></path><path d="M23.4,6.2 L23.4,15.6 M18.7,10.9 L28.1,10.9" stroke="#5bc062" stroke-width="2.2" stroke-linecap="round"></path></svg><svg style="position:absolute;left:598px;top:1286.8px;overflow:visible" width="20.2" height="23.5" viewBox="0 0 20.2 23.5"><path d="M7.2,1.2 L12.8,1.2 L13.6,3 L19,3 Q20.2,3 20.2,4.2 L20.2,5 L-0.2,5 L-0.2,4.2 Q-0.2,3 1,3 L6.4,3 Z" fill="#e5393f"></path><path d="M1.4,6.6 L18.6,6.6 L17.4,21 Q17.2,23 15.2,23 L4.8,23 Q2.8,23 2.6,21 Z" fill="#e5393f"></path><rect x="5.7" y="9.4" width="1.7" height="10.8" fill="#fbe4e5"></rect><rect x="9.2" y="9.4" width="1.7" height="10.8" fill="#fbe4e5"></rect><rect x="12.7" y="9.4" width="1.7" height="10.8" fill="#fbe4e5"></rect></svg><svg style="position:absolute;left:597.9px;top:1388px;overflow:visible" width="20.5" height="23.5" viewBox="0 0 20.5 23.5"><circle cx="10.1" cy="5.7" r="5.6" fill="#4a86ef"></circle><path d="M0,23 Q0,14 8.4,14 L11.8,14 Q20.2,14 20.2,23 Z" fill="#4a86ef"></path></svg><svg style="position:absolute;left:597px;top:1486.6px;overflow:visible" width="22" height="22" viewBox="0 0 22 22"><circle cx="11" cy="11" r="11" fill="#e6b23a"></circle><path d="M7.8,8.6 Q7.8,5.4 11,5.4 Q14.2,5.4 14.2,8.3 Q14.2,10 12.4,11 Q11,11.8 11,13.2" fill="none" stroke="#fff" stroke-width="2.3" stroke-linecap="round"></path><circle cx="11" cy="16.6" r="1.5" fill="#fff"></circle></svg><div style="position:absolute;left:163px;top:897px;width:56px;height:56px;border-radius:50%;background:#71d163;box-shadow:0 2px 4px rgba(0,0,0,.12);"></div><div style="position:absolute;left:781.7px;top:269px;width:56px;height:56px;border-radius:50%;background:#71d163;box-shadow:0 2px 4px rgba(0,0,0,.12);"></div><svg style="position:absolute;left:180px;top:905px;" width="20" height="36" viewBox="0 0 20 36"><path d="M3.4,10 L10.9,5 L16.9,5 L16.9,33 L10.9,33 L10.9,10.7 L3.4,15 Z" fill="#fff"></path></svg><svg style="position:absolute;left:799px;top:281px;" width="23" height="30" viewBox="0 0 23 30"><path d="M2.85,10.6 A7.9,7.9 0 0 1 18.65,10.6 C18.65,13.8 17,15.6 14.6,17.9 L3.6,27 M0.9,26.75 L21.5,26.75" fill="none" stroke="#fff" stroke-width="5" stroke-linejoin="miter"></path></svg>
</body></html>
